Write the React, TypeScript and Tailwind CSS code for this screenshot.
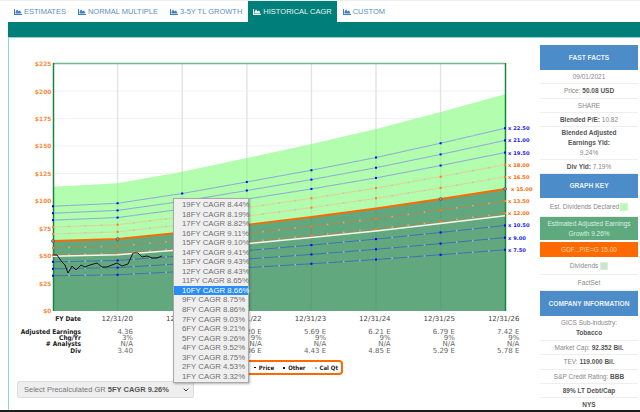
import { ChevronDown } from 'lucide-react';
import { FaChartArea } from 'react-icons/fa';

const tabs = ['ESTIMATES', 'NORMAL MULTIPLE', '3-5Y TL GROWTH', 'HISTORICAL CAGR', 'CUSTOM'];

const majorX = [53, 117.6, 182.2, 246.8, 311.4, 376, 440.6, 505];
// pixel height of the 15x line above the $0 baseline
const base = [69.5, 71.5, 78, 85.7, 93.5, 102, 111.5, 121.5];
const zeroY = 310.5;

const lineY = (i: number, m: number) => zeroY - (base[i] * m) / 15;
const points = (m: number) => majorX.map((x, i) => `${x},${lineY(i, m)}`).join(' ');

const multiples = [
  { m: 22.5, kind: 'blue' },
  { m: 21, kind: 'blue' },
  { m: 19.5, kind: 'blue' },
  { m: 18, kind: 'orange' },
  { m: 16.5, kind: 'orange' },
  { m: 13.5, kind: 'orange' },
  { m: 12, kind: 'orange' },
  { m: 10.5, kind: 'blue' },
  { m: 9, kind: 'blue' },
  { m: 7.5, kind: 'blue' }
];

const yLabels = [225, 200, 175, 150, 125, 100, 75, 50, 25, 0];

const priceLine = [
  [53, 255], [57, 255], [62, 262], [65, 265], [68, 273], [72, 266], [76, 270], [81, 265], [85, 267],
  [90, 265], [97, 263], [102, 267], [107, 267], [112, 265], [117, 263], [122, 266], [128, 264],
  [133, 253], [138, 253], [142, 257], [147, 256], [152, 258], [157, 258], [162, 256]
]
  .map(p => p.join(','))
  .join(' ');

const cagrOptions = [
  '19FY CAGR 8.44%', '18FY CAGR 8.19%', '17FY CAGR 8.82%', '16FY CAGR 9.11%', '15FY CAGR 9.10%',
  '14FY CAGR 9.41%', '13FY CAGR 9.43%', '12FY CAGR 8.43%', '11FY CAGR 8.65%', '10FY CAGR 8.66%',
  '9FY CAGR 8.75%', '8FY CAGR 8.86%', '7FY CAGR 9.03%', '6FY CAGR 9.21%', '5FY CAGR 9.26%',
  '4FY CAGR 9.52%', '3FY CAGR 8.75%', '2FY CAGR 4.53%', '1FY CAGR 3.32%'
];

const tableRows = [
  { label: 'FY Date', values: ['12/31/20', '12/31/21', '12/31/22', '12/31/23', '12/31/24', '12/31/25', '12/31/26'] },
  { label: 'Adjusted Earnings', values: ['4.36', '', '5.20 E', '5.69 E', '6.21 E', '6.79 E', '7.42 E'] },
  { label: 'Chg/Yr', values: ['3%', '', '9%', '9%', '9%', '9%', '9%'] },
  { label: '# Analysts', values: ['N/A', '', 'N/A', 'N/A', 'N/A', 'N/A', 'N/A'] },
  { label: 'Div', values: ['3.40', '', '4.06 E', '4.43 E', '4.85 E', '5.29 E', '5.78 E'] }
];

function Chart() {
  const fillTop = majorX.map((x, i) => `${x},${lineY(i, 26.7)}`).join(' ');
  const darkTop = points(15);
  return (
    <svg width="531" height="277" viewBox="9 38 531 277" className="block">
      {[63.5, 91, 118.5, 146, 173.5, 201, 228, 255.5, 283].map(y => (
        <line key={y} x1="53" x2="505" y1={y} y2={y} stroke="#f1f1f1" strokeWidth="1" />
      ))}
      {majorX.slice(1, -1).map(x => (
        <line key={x} x1={x} x2={x} y1="63" y2="311" stroke="#e4e4e4" strokeWidth="1.5" />
      ))}
      <polygon points={`${fillTop} 505,311 53,311`} fill="#b2fdae" />
      <polygon points={`${darkTop} 505,311 53,311`} fill="#62a87f" />
      {majorX.slice(1, -1).map(x => (
        <line key={x} x1={x} x2={x} y1={lineY(majorX.indexOf(x), 26.7)} y2="311" stroke="#000" strokeOpacity="0.05" strokeWidth="1.5" />
      ))}
      <polyline points="53,63.5 505,63.5" fill="none" stroke="#72b98a" strokeWidth="1.5" />
      <line x1="53.5" x2="53.5" y1="63" y2="311" stroke="#15863c" strokeWidth="1.5" />
      <line x1="505.5" x2="505.5" y1="63" y2="311" stroke="#15863c" strokeWidth="1.5" />

      {multiples.map(({ m, kind }) => {
        const below = m < 15;
        const stroke = kind === 'blue' ? (below ? '#3f72b2' : '#86add9') : below ? '#a98a52' : '#e3d09a';
        const dot = kind === 'blue' ? '#0000f0' : '#ff7a1a';
        return (
          <g key={m}>
            <polyline points={points(m)} fill="none" stroke={stroke} strokeWidth="1" />
            {majorX.slice(0, -1).map((x, i) =>
              [1, 2, 3].map(k => {
                const px = x + ((majorX[i + 1] - x) * k) / 4;
                const py = lineY(i, m) + ((lineY(i + 1, m) - lineY(i, m)) * k) / 4;
                return (
                  <rect key={k} x={px - 0.8} y={py - 0.8} width="1.6" height="1.6" fill={below ? '#a9bdb0' : '#cdbfbf'} />
                );
              })
            )}
            {majorX.map((x, i) => (
              <rect key={x} x={x - 1} y={lineY(i, m) - 1} width="2" height="2" fill={dot} />
            ))}
            <text
              x="508"
              y={lineY(7, m) + 2}
              fontFamily="DejaVu Sans, sans-serif"
              fontWeight="700"
              fontSize="5.2"
              fill={kind === 'blue' ? '#1a1ae6' : '#ff6a00'}
            >
              x {m.toFixed(2)}
            </text>
          </g>
        );
      })}

      <polyline points={points(11.7)} fill="none" stroke="#f5f7f0" strokeWidth="1.5" />
      <polyline points={darkTop} fill="none" stroke="#ff6a00" strokeWidth="1.8" />
      {[0, 1, 6, 7].map(i => (
        <circle key={i} cx={majorX[i]} cy={lineY(i, 15)} r="1.5" fill="#9a9a9a" stroke="#444" strokeWidth="0.6" />
      ))}
      <text x="511" y={lineY(7, 15) + 2} fontFamily="DejaVu Sans, sans-serif" fontWeight="700" fontSize="5.2" fill="#ff6a00">
        x 15.00
      </text>
      <polyline points={priceLine} fill="none" stroke="#111" strokeWidth="1" />

      {yLabels.map(v => (
        <text
          key={v}
          x="51.5"
          y={zeroY - v * 1.097 + 2.5}
          textAnchor="end"
          fontFamily="DejaVu Sans, sans-serif"
          fontWeight="700"
          fontSize="6"
          fill="#ff8a3c"
        >
          ${v}
        </text>
      ))}
    </svg>
  );
}

function DataTable() {
  return (
    <div className="font-['DejaVu_Sans',sans-serif] text-[7px] leading-[6.4px] text-[#666]">
      {tableRows.map((row, i) => (
        <div
          key={row.label}
          className={`grid grid-cols-[72px_52px_repeat(6,64.4px)] text-right ${i === 0 ? 'mb-[5.5px] h-[8px] leading-[8px]' : ''}`}
        >
          <span className="font-['DejaVu_Sans_Condensed','DejaVu_Sans',sans-serif] text-[6.5px] font-bold text-[#222]">{row.label}</span>
          {row.values.map((value, j) => (
            <span key={j} className={i === 0 ? 'text-[#444]' : ''}>
              {value}
            </span>
          ))}
        </div>
      ))}
    </div>
  );
}

function Legend() {
  return (
    <div className="ml-[232px] mt-[6px] flex h-[15px] w-[102px] items-center justify-end gap-[9px] rounded-[4px] border-2 border-[#ff6a00] pr-[3px] font-['DejaVu_Sans_Condensed','DejaVu_Sans',sans-serif] text-[6px] font-bold text-[#222]">
      <span className="flex items-center gap-[3px]">
        <span className="h-px w-[2px] bg-black" />
        Price
      </span>
      <span className="flex items-center gap-[3px]">
        <span className="size-[2px] bg-[#0000f0]" />
        Other
      </span>
      <span className="flex items-center gap-[3px]">
        <span className="size-[2px] bg-[#7fb5e8]" />
        Cal Qt
      </span>
    </div>
  );
}

function FactRow({ children, className = '' }: { children: React.ReactNode; className?: string }) {
  return (
    <div className={`flex flex-col items-center justify-center border-b border-[#eeeeee] px-1 text-center leading-[10px] ${className}`}>
      {children}
    </div>
  );
}

function SideHeader({ title, className }: { title: string; className: string }) {
  return (
    <div className={`flex items-center justify-center bg-[#4c8cc9] text-[6.6px] font-bold text-[#e8f1fa] ${className}`}>
      {title}
    </div>
  );
}

function Sidebar() {
  return (
    <aside className="mt-[7px] w-[98px] font-['Liberation_Sans',sans-serif] text-[6.5px] text-[#888]">
      <SideHeader title="FAST FACTS" className="h-[25px]" />
      <FactRow className="h-[14px]">09/01/2021</FactRow>
      <FactRow className="h-[15px]">
        <span>
          Price: <b className="text-[#555]">50.08 USD</b>
        </span>
      </FactRow>
      <FactRow className="h-[14px]">SHARE</FactRow>
      <FactRow className="h-[14px]">
        <span>
          <b className="text-[#555]">Blended P/E:</b> 10.82
        </span>
      </FactRow>
      <FactRow className="h-[33px]">
        <b className="text-[#555]">Blended Adjusted</b>
        <b className="text-[#555]">Earnings Yld:</b>
        <span>9.24%</span>
      </FactRow>
      <FactRow className="h-[14px]">
        <span>
          <b className="text-[#555]">Div Yld:</b> 7.19%
        </span>
      </FactRow>
      <SideHeader title="GRAPH KEY" className="h-[24px]" />
      <FactRow className="h-[19px]">
        <span className="flex items-center gap-px">
          Est. Dividends Declared
          <span className="size-[8px] border border-[#d8f0d4] bg-[#b2fdae]" />
        </span>
      </FactRow>
      <div className="flex h-[23px] items-center justify-center bg-[#5fa97f] px-[6px] text-center leading-[10px] text-[#dcefe3]">
        Estimated Adjusted Earnings Growth 9.26%
      </div>
      <div className="mt-[2px] flex h-[15px] items-center justify-center bg-[#ff6a00] text-[#ffd2ad]">GDF...P/E=G 15.00</div>
      <FactRow className="h-[18px]">
        <span className="flex items-center gap-[2px]">
          Dividends
          <span className="size-[8px] border border-[#dcebdc] bg-[#c9e6cb]" />
        </span>
      </FactRow>
      <FactRow className="h-[16px]">FactSet</FactRow>
      <SideHeader title="COMPANY INFORMATION" className="h-[25px]" />
      <FactRow className="h-[25px]">
        <span>GICS Sub-industry:</span>
        <b className="text-[#555]">Tobacco</b>
      </FactRow>
      <FactRow className="h-[14px]">
        <span>
          Market Cap: <b className="text-[#555]">92.352 Bil.</b>
        </span>
      </FactRow>
      <FactRow className="h-[15px]">
        <span>
          TEV: <b className="text-[#555]">119.000 Bil.</b>
        </span>
      </FactRow>
      <FactRow className="h-[14px]">
        <span>
          S&amp;P Credit Rating: <b className="text-[#555]">BBB</b>
        </span>
      </FactRow>
      <FactRow className="h-[14px]">
        <b className="text-[#555]">89% LT Debt/Cap</b>
      </FactRow>
      <FactRow className="h-[13px] border-b-0">
        <b className="text-[#555]">NYS</b>
      </FactRow>
    </aside>
  );
}

export default function App() {
  return (
    <div className="relative flex h-[412px] w-[640px] flex-col overflow-hidden bg-white font-['Liberation_Sans',sans-serif]">
      <nav className="flex h-[22px] border-t border-[#eeeeee] pl-2">
        {tabs.map(tab => {
          const active = tab === 'HISTORICAL CAGR';
          return (
            <div
              key={tab}
              className={`flex items-center gap-[2px] text-[7.5px] ${
                active ? 'bg-[#007f7a] px-[5px] text-[#e6f5f4]' : 'px-[6px] text-[#5b8fc4]'
              }`}
            >
              <FaChartArea className={`size-[8px] ${active ? 'text-white' : 'text-[#3f7fc4]'}`} />
              {tab}
            </div>
          );
        })}
      </nav>
      <div className="ml-2 h-[15px] bg-[#007f7a]" />
      <main className="ml-2 flex min-h-0 flex-1 border-l border-t border-[#93d3d3]">
        <section className="w-[531px]">
          <Chart />
          <DataTable />
          <Legend />
          <div className="ml-[8px] mt-[6px] flex h-[17px] w-[177px] items-center justify-between rounded-[2px] border border-[#dddddd] bg-[#eeeeee] pl-[6px] pr-[3px] text-[7.5px] text-[#777]">
            <span>
              Select Precalculated GR <b className="text-[#555]">5FY CAGR 9.26%</b>
            </span>
            <ChevronDown className="size-[8px] text-[#444]" strokeWidth={3} />
          </div>
        </section>
        <Sidebar />
      </main>
      <div className="h-[2px] bg-[#1c1c1c]" />

      <ul className="absolute left-[173px] top-[198px] w-[76px] border border-[#a9a9a9] bg-[#efefef] py-px text-[7.8px] leading-[9.55px] text-[#6f6f6f] shadow-[1px_1px_2px_rgba(0,0,0,0.3)]">
        {cagrOptions.map(option => (
          <li key={option} className={`pl-[8px] whitespace-nowrap ${option.startsWith('10FY') ? 'bg-[#2a8cf5] text-white' : ''}`}>
            {option}
          </li>
        ))}
      </ul>
    </div>
  );
}
